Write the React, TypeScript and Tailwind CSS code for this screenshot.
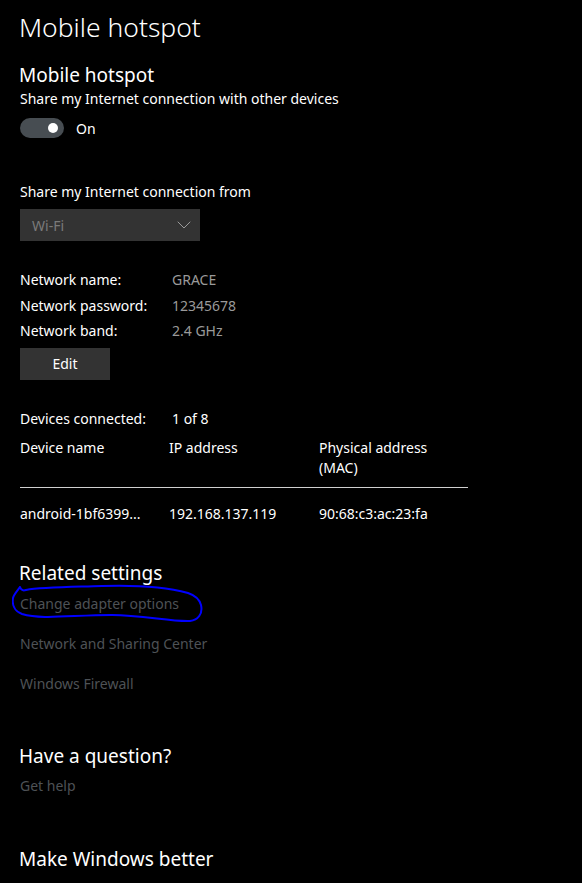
import { ChevronDown } from "lucide-react";

const font = { fontFamily: '"Segoe UI", "Noto Sans", "Open Sans", sans-serif' };

function Toggle() {
  return (
    <div className="flex items-center gap-3 mt-[9px] h-5">
      <div className="w-[44px] h-5 rounded-full bg-[#474d52] flex items-center justify-end pr-[6px]">
        <div className="w-[10px] h-[10px] rounded-full bg-white" />
      </div>
      <span className="text-[14px] text-white">On</span>
    </div>
  );
}

function InfoRow({ label, value }: { label: string; value: string }) {
  return (
    <div className="flex h-[25.5px] items-center text-[14px]">
      <span className="w-[152px] text-white">{label}</span>
      <span className="text-[#9a9a9a]">{value}</span>
    </div>
  );
}

export default function App() {
  return (
    <div
      className="w-[582px] h-[883px] bg-black text-white pl-5 overflow-hidden"
      style={font}
    >
      <h1 className="text-[26.5px] font-light leading-[40px] pt-[7px] -ml-[1px]">
        Mobile hotspot
      </h1>

      <h2 className="text-[19px] leading-[26px] mt-[15px] -ml-[1px]">Mobile hotspot</h2>
      <p className="text-[14px] leading-5 mt-[1px]">
        Share my Internet connection with other devices
      </p>
      <Toggle />

      <p className="text-[14px] leading-5 mt-[44px]">Share my Internet connection from</p>
      <div className="mt-[7px] w-[180px] h-8 bg-[#333333] flex items-center justify-between pl-3 pr-1">
        <span className="text-[14px] text-[#7a7a7a]">Wi-Fi</span>
        <ChevronDown size={24} strokeWidth={1} className="text-[#9a9a9a]" />
      </div>

      <div className="mt-[26px]">
        <InfoRow label="Network name:" value="GRACE" />
        <InfoRow label="Network password:" value="12345678" />
        <InfoRow label="Network band:" value="2.4 GHz" />
      </div>
      <button className="mt-[4px] w-[90px] h-8 bg-[#333333] text-[14px] text-white">
        Edit
      </button>

      <div className="mt-[27px] flex h-6 items-center text-[14px]">
        <span className="w-[152px]">Devices connected:</span>
        <span>1 of 8</span>
      </div>

      <div className="w-[448px] mt-[7px]">
        <div className="grid grid-cols-[149px_150px_1fr] text-[14px] leading-5">
          <span>Device name</span>
          <span>IP address</span>
          <span>
            Physical address
            <br />
            (MAC)
          </span>
        </div>
        <div className="h-px bg-[#d0d0d0] mt-[9px]" />
        <div className="grid grid-cols-[149px_150px_1fr] text-[14px] leading-5 mt-4">
          <span>android-1bf6399...</span>
          <span>192.168.137.119</span>
          <span>90:68:c3:ac:23:fa</span>
        </div>
      </div>

      <h2 className="text-[19px] leading-7 mt-[35px] -ml-[1px]">Related settings</h2>
      <div className="relative mt-[7px] h-5 w-fit">
        <a className="block text-[14px] leading-5 text-[#4e5256]">Change adapter options</a>
        <svg
          className="absolute left-[-8px] top-[-10px] pointer-events-none"
          width="192"
          height="42"
          viewBox="0 0 192 42"
          fill="none"
        >
          <path
            d="M8 3 C6 6 2 10 1 14 C0 20 2 27 10 30 C30 36 60 31 100 31 C130 31 160 38 178 37 C186 36 191 30 189 21 C187 14 182 11 176 9 C150 2 120 1 90 2 C60 3 30 3 14 6 C11 7 9 6 8 3"
            stroke="#0000ff"
            strokeWidth="2"
            strokeLinecap="round"
          />
        </svg>
      </div>
      <a className="block text-[14px] leading-5 text-[#4e5256] mt-5">
        Network and Sharing Center
      </a>
      <a className="block text-[14px] leading-5 text-[#4e5256] mt-5">Windows Firewall</a>

      <h2 className="text-[19px] leading-7 mt-[48px] -ml-[1px]">Have a question?</h2>
      <a className="block text-[14px] leading-5 text-[#4e5256] mt-[6px]">Get help</a>

      <h2 className="text-[19px] leading-7 mt-[49px] -ml-[1px]">Make Windows better</h2>
    </div>
  );
}
